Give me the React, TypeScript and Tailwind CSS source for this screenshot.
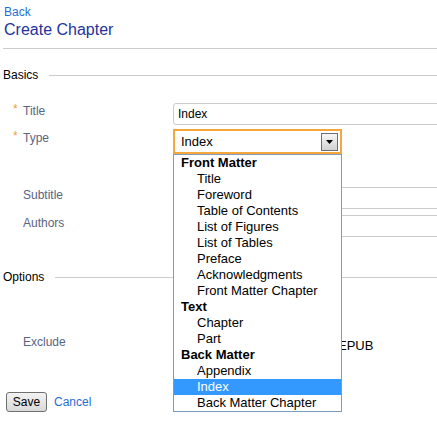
import React from 'react'

const OPTIONS: { label: string; group?: boolean; selected?: boolean }[] = [
  { label: 'Front Matter', group: true },
  { label: 'Title' },
  { label: 'Foreword' },
  { label: 'Table of Contents' },
  { label: 'List of Figures' },
  { label: 'List of Tables' },
  { label: 'Preface' },
  { label: 'Acknowledgments' },
  { label: 'Front Matter Chapter' },
  { label: 'Text', group: true },
  { label: 'Chapter' },
  { label: 'Part' },
  { label: 'Back Matter', group: true },
  { label: 'Appendix' },
  { label: 'Index', selected: true },
  { label: 'Back Matter Chapter' },
]

function Label({ text, required, className = '' }: { text: string; required?: boolean; className?: string }) {
  return (
    <div className={`w-[170px] shrink-0 pl-[10px] text-[12px] leading-[14px] text-[#5a6480] ${className}`}>
      <span className="inline-block w-[10px] -translate-y-[2px] text-[#f0a040]">{required ? '*' : ''}</span>
      {text}
    </div>
  )
}

function TextInput({ value = '' }: { value?: string }) {
  return (
    <div className="flex h-[22px] w-[300px] shrink-0 items-center rounded-[3px] border border-[#cccccc] pl-[4px] text-[12px] text-black">
      {value}
    </div>
  )
}

function SectionHeader({ text }: { text: string }) {
  return (
    <div className="flex h-[16px] items-center text-[12px] text-black">
      <span>{text}</span>
      <div className="ml-[11px] flex-1 border-t border-[#cccccc]" />
    </div>
  )
}

export default function App() {
  return (
    <div className="relative h-[421px] w-[437px] overflow-hidden bg-white pl-[3px] font-['Liberation_Sans',Arial,sans-serif]">
      {/* Header */}
      <div className="pl-[1px] pt-[5px]">
        <a href="#" className="block text-[12px] leading-[14px] text-[#1f6ed4]">Back</a>
        <h1 className="mt-[1px] text-[16px] leading-[20px] text-[#23339b]">Create Chapter</h1>
      </div>
      <div className="mt-[8px] border-t border-[#cccccc]" />

      {/* Basics */}
      <div className="mt-[18px]">
        <SectionHeader text="Basics" />
      </div>

      <div className="mt-[20px] flex items-start">
        <Label text="Title" required className="pt-[1px]" />
        <TextInput value="Index" />
      </div>

      <div className="mt-[4px] flex items-start">
        <Label text="Type" required className="pt-[2px]" />
        <div className="relative flex h-[25px] w-[169px] shrink-0 items-center border-2 border-[#f6a73c] pl-[6px] text-[13px] text-black">
          <span>Index</span>
          <div className="ml-auto mr-[2px] flex h-[18px] w-[17px] items-center justify-center border border-[#6e6e6e] bg-gradient-to-b from-[#f6f6f6] to-[#d2d2d2]">
            <svg width="7" height="4" viewBox="0 0 7 4">
              <polygon points="0,0 7,0 3.5,4" fill="#000" />
            </svg>
          </div>

          {/* Open dropdown */}
          <div className="absolute left-[-2px] top-[23px] z-10 w-[169px] border border-[#7f9db9] bg-white text-[13px] leading-[16px] text-black">
            {OPTIONS.map((o, i) => (
              <div
                key={i}
                className={`h-[16px] whitespace-nowrap ${o.group ? 'pl-[7px] font-bold' : 'pl-[23px]'} ${o.selected ? 'bg-[#3399ff] text-white' : ''}`}
              >
                {o.label}
              </div>
            ))}
          </div>
        </div>
      </div>

      <div className="mt-[33px] flex items-start">
        <Label text="Subtitle" className="pt-[1px]" />
        <TextInput />
      </div>

      <div className="mt-[6px] flex items-start">
        <Label text="Authors" className="pt-[1px]" />
        <TextInput />
      </div>

      {/* Options */}
      <div className="mt-[32px]">
        <SectionHeader text="Options" />
      </div>

      <div className="mt-[49px] flex h-[14px] items-start">
        <Label text="Exclude" className="pt-[1px]" />
        <div className="flex text-[13px] leading-[15px] text-black">
          <span className="w-[165px]" />
          <span className="mt-[4px]">EPUB</span>
        </div>
      </div>

      {/* Actions */}
      <div className="mt-[44px] flex items-center">
        <button className="ml-[3px] h-[20px] w-[41px] rounded-[3px] border border-[#707070] bg-gradient-to-b from-[#f3f3f3] to-[#d9d9d9] text-[12px] text-black">
          Save
        </button>
        <a href="#" className="ml-[7px] text-[12px] text-[#1f6ed4]">Cancel</a>
      </div>
    </div>
  )
}
